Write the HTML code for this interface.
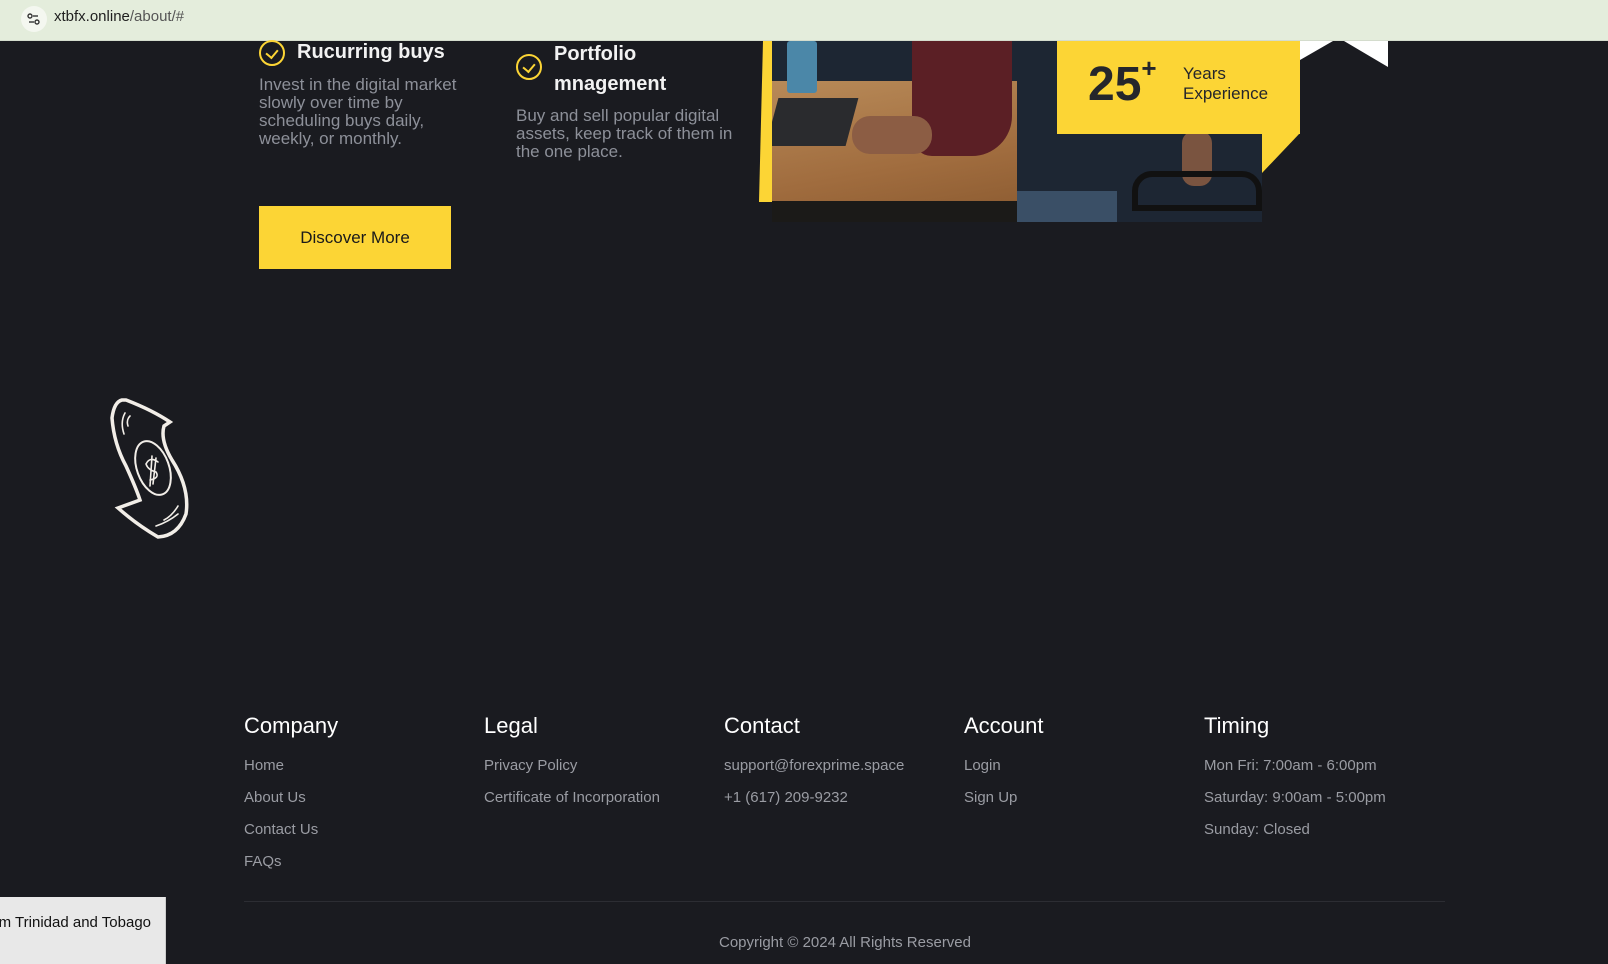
<!DOCTYPE html>
<html><head><meta charset="utf-8"><style>
*{margin:0;padding:0;box-sizing:border-box}
body{width:1608px;height:964px;overflow:hidden;background:#1a1b20;font-family:"Liberation Sans",sans-serif;position:relative}
.bar{position:absolute;left:0;top:0;width:1608px;height:41px;background:#e4eddc;border-bottom:1px solid #d4dccd}
.ic{position:absolute;left:21px;top:6px;width:26px;height:26px;border-radius:50%;background:#f4f7f0}
.url{position:absolute;left:54px;top:8px;font-size:15px;color:#1f1f1f}
.url span{color:#555}
.abs{position:absolute}
.t{color:#f2f2f2;font-weight:bold;font-size:20px}
.p{color:#8d9099;font-size:17px;line-height:18px}
.chk{position:absolute;width:26px;height:26px;border:2.5px solid #fcd535;border-radius:50%}
.chk:after{content:"";position:absolute;left:7px;top:5px;width:6px;height:9px;border:solid #fcd535;border-width:0 2.5px 2.5px 0;transform:rotate(40deg)}
.btn{left:259px;top:206px;width:192px;height:63px;background:#fcd535;color:#1a1a1a;font-size:17px;text-align:center;line-height:63px}
.fh{position:absolute;top:713px;color:#fff;font-size:22px}
.fl{position:absolute;color:#9a9ca3;font-size:15px;line-height:32px}
</style></head><body>
<div class="bar"><div class="ic"><svg width="26" height="26"><g stroke="#333" stroke-width="1.4" fill="none"><circle cx="9" cy="10" r="2"/><line x1="12" y1="10" x2="17" y2="10"/><circle cx="16" cy="16" r="2"/><line x1="8" y1="16" x2="13" y2="16"/></g></svg></div><div class="url">xtbfx.online<span>/about/#</span></div></div>

<div class="chk" style="left:259px;top:40px"></div>
<div class="abs t" style="left:297px;top:41px">Rucurring buys</div>
<div class="abs p" style="left:259px;top:76px;width:215px">Invest in the digital market slowly over time by scheduling buys daily, weekly, or monthly.</div>

<div class="chk" style="left:516px;top:54px"></div>
<div class="abs t" style="left:554px;top:39px;line-height:30px">Portfolio<br>mnagement</div>
<div class="abs p" style="left:516px;top:107px;width:230px">Buy and sell popular digital assets, keep track of them in the one place.</div>

<div class="abs btn">Discover More</div>

<div class="abs" style="left:759px;top:41px;width:14px;height:161px;background:#fcd535;clip-path:polygon(4px 0,100% 0,100% 100%,0 100%)"></div>
<div class="abs" style="left:772px;top:41px;width:490px;height:181px;overflow:hidden;background:#1d2633">
 <div class="abs" style="left:0;top:40px;width:245px;height:141px;background:linear-gradient(170deg,#b88a58,#a06c3e 60%,#8a5a30)"></div>
 <div class="abs" style="left:0;top:160px;width:245px;height:21px;background:#1b1a18"></div>
 <div class="abs" style="left:15px;top:0;width:30px;height:52px;background:#4b87a8;border-radius:3px"></div>
 <div class="abs" style="left:0;top:57px;width:80px;height:48px;background:#2a2b2e;transform:skewX(-15deg)"></div>
 <div class="abs" style="left:140px;top:0;width:100px;height:115px;background:#5b1f25;border-radius:0 0 40px 20px"></div>
 <div class="abs" style="left:245px;top:150px;width:100px;height:31px;background:#3a4f66"></div>
 <div class="abs" style="left:80px;top:75px;width:80px;height:38px;background:#8c5d44;border-radius:18px"></div>
 <div class="abs" style="left:410px;top:90px;width:30px;height:55px;background:#7a5440;border-radius:12px"></div>
 <div class="abs" style="left:360px;top:130px;width:130px;height:40px;border:6px solid #111;border-radius:20px 20px 0 0"></div>
</div>
<div class="abs" style="left:1057px;top:41px;width:243px;height:93px;background:#fcd535"></div>
<div class="abs" style="left:1262px;top:133px;width:38px;height:40px;background:#fcd535;clip-path:polygon(0 0,100% 0,0 100%)"></div>
<svg class="abs" style="left:1300px;top:41px" width="90" height="30"><polygon fill="#fff" points="0,0 33,0 0,19"/><polygon fill="#fff" points="44,0 88,0 88,26"/></svg>
<div class="abs" style="left:1088px;top:57px;font-size:48px;font-weight:bold;color:#25262b">25<sup style="font-size:26px;position:relative;top:-6px">+</sup></div>
<div class="abs" style="left:1183px;top:64px;font-size:17px;line-height:20px;color:#25262b">Years<br>Experience</div>

<svg class="abs" style="left:106px;top:396px" width="90" height="148" viewBox="0 0 90 148"><g fill="none" stroke="#f2eee8" stroke-linecap="round"><path stroke-width="3.5" d="M16 4 Q8 6 6 22 Q8 48 20 70 Q30 92 34 104 L12 112 Q30 128 52 141 Q72 140 80 118 Q84 92 66 64 Q54 44 58 30 L64 26 Q46 14 20 4 Z"/><ellipse stroke-width="2" cx="47" cy="72" rx="16" ry="28" transform="rotate(-20 47 72)"/><path stroke-width="1.6" d="M52 66 Q44 60 40 68 Q42 74 50 76 Q54 82 44 84 M46 60 L44 90 M50 62 L47 88"/><path stroke-width="1.6" d="M19 17 Q14 26 18 38 M24 20 Q20 24 22 30 M58 124 Q66 120 72 110 M50 130 Q62 126 72 118"/></g></svg>

<div class="fh" style="left:244px">Company</div>
<div class="fh" style="left:484px">Legal</div>
<div class="fh" style="left:724px">Contact</div>
<div class="fh" style="left:964px">Account</div>
<div class="fh" style="left:1204px">Timing</div>
<div class="fl" style="left:244px;top:750px">Home<br>About Us<br>Contact Us<br>FAQs</div>
<div class="fl" style="left:484px;top:750px">Privacy Policy<br>Certificate of Incorporation</div>
<div class="fl" style="left:724px;top:750px">support@forexprime.space<br>+1 (617) 209-9232</div>
<div class="fl" style="left:964px;top:750px">Login<br>Sign Up</div>
<div class="fl" style="left:1204px;top:750px">Mon Fri: 7:00am - 6:00pm<br>Saturday: 9:00am - 5:00pm<br>Sunday: Closed</div>
<div class="abs" style="left:244px;top:901px;width:1201px;height:1px;background:#2c2d33"></div>
<div class="abs" style="left:0;top:934px;width:1690px;text-align:center;color:#9a9ca3;font-size:15px">Copyright © 2024 All Rights Reserved</div>
<div class="abs" style="left:0;top:897px;width:166px;height:67px;background:#e8e8e8;border-right:1px solid #ccc;overflow:hidden"><div style="position:absolute;right:14px;top:17px;font-size:15px;color:#111;white-space:nowrap">om Trinidad and Tobago</div></div>
</body></html>
